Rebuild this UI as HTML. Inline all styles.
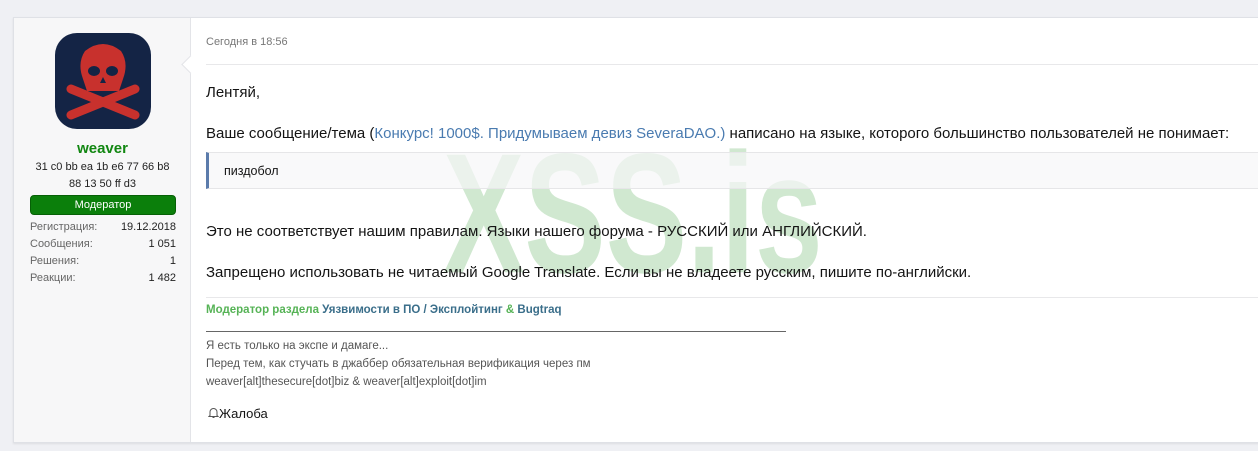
<!DOCTYPE html>
<html><head><meta charset="utf-8"><style>
body{margin:0;width:1258px;height:451px;background:#eff0f4;font-family:"Liberation Sans","DejaVu Sans",sans-serif;position:relative;overflow:hidden}
.card{position:absolute;left:13px;top:17px;width:1250px;height:424px;background:#fff;border:1px solid #dfe1e6;box-shadow:0 1px 2px rgba(0,0,0,.08)}
.side{position:absolute;left:0;top:0;width:176px;height:424px;background:#f7f7f8;border-right:1px solid #e3e4e8}
.arrow{position:absolute;left:170px;top:40px;width:12px;height:12px;background:#fff;border-left:1px solid #e3e4e8;border-bottom:1px solid #e3e4e8;transform:rotate(45deg)}
.av{position:absolute;left:41px;top:15px;width:96px;height:96px;border-radius:22px;background:#142445;overflow:hidden}
.name{position:absolute;left:0;width:177px;top:122px;text-align:center;color:#128712;font-weight:bold;font-size:15px}
.hex{position:absolute;left:0;width:177px;top:141px;text-align:center;font-size:11px;line-height:17px;color:#222}
.badge{position:absolute;left:16px;top:177px;width:144px;height:18px;background:#0b7f0b;border:1px solid #066006;border-radius:4px;color:#fff;font-size:11px;text-align:center;line-height:18px}
.st{position:absolute;left:16px;width:146px;font-size:11px;color:#666;display:flex;justify-content:space-between}
.st b{font-weight:normal;color:#222}
.t{position:absolute}
.wm{position:absolute;left:443px;top:128px;font-size:122px;font-weight:bold;color:rgba(150,205,150,.45);transform:scaleY(1.4);transform-origin:top left;line-height:1}
</style></head><body>
<div class="card">
<div class="side">
<div class="av"><svg width="96" height="96" viewBox="0 0 96 96">
<path d="M30 18 Q48 4 66 18 Q74 30 68 46 L64 58 L32 58 L28 46 Q22 30 30 18Z" fill="#c8312d"/>
<ellipse cx="39" cy="38" rx="6" ry="5" fill="#142445"/><ellipse cx="57" cy="38" rx="6" ry="5" fill="#142445"/>
<path d="M48 44 L45 50 L51 50Z" fill="#142445"/>
<path d="M16 56 L80 82 M80 56 L16 82" stroke="#c8312d" stroke-width="9" stroke-linecap="round"/>
</svg></div>
<div class="name">weaver</div>
<div class="hex">31 c0 bb ea 1b e6 77 66 b8<br>88 13 50 ff d3</div>
<div class="badge">Модератор</div>
<div class="st" style="top:203px"><span>Регистрация:</span><b>19.12.2018</b></div>
<div class="st" style="top:220px"><span>Сообщения:</span><b>1 051</b></div>
<div class="st" style="top:237px"><span>Решения:</span><b>1</b></div>
<div class="st" style="top:254px"><span>Реакции:</span><b>1 482</b></div>
</div>
<div class="arrow"></div>
</div>
<div class="wm">XSS.is</div>
<div class="t" style="left:206px;top:36px;font-size:11px;color:#777">Сегодня в 18:56</div>
<div style="position:absolute;left:206px;top:64px;width:1052px;height:1px;background:#e8e8ea"></div>
<div class="t" style="left:206px;top:84px;font-size:15px;color:#141414">Лентяй,</div>
<div class="t" style="left:206px;top:125px;font-size:15px;color:#141414;white-space:nowrap">Ваше сообщение/тема (<span style="color:#4a7bb0">Конкурс! 1000$. Придумываем девиз SeveraDAO.)</span> написано на языке, которого большинство пользователей не понимает:</div>
<div style="position:absolute;left:206px;top:152px;width:1052px;height:37px;background:rgba(247,247,248,.7);border-top:1px solid #e6e6e8;border-bottom:1px solid #e6e6e8;border-left:3px solid #5b7bab;box-sizing:border-box"></div>
<div class="t" style="left:224px;top:164px;font-size:12.5px;color:#141414">пиздобол</div>
<div class="t" style="left:206px;top:223px;font-size:15px;color:#141414">Это не соответствует нашим правилам. Языки нашего форума - РУССКИЙ или АНГЛИЙСКИЙ.</div>
<div class="t" style="left:206px;top:264px;font-size:15px;color:#141414">Запрещено использовать не читаемый Google Translate. Если вы не владеете русским, пишите по-английски.</div>
<div style="position:absolute;left:206px;top:297px;width:1052px;height:1px;background:#e8e8ea"></div>
<div class="t" style="left:206px;top:304px;font-size:11.5px;font-weight:bold;color:#56b356">Модератор раздела <span style="color:#3a6e8a">Уязвимости в ПО / Эксплойтинг</span> &amp; <span style="color:#3a6e8a">Bugtraq</span></div>
<div style="position:absolute;left:206px;top:331px;width:580px;height:1px;background:#666"></div>
<div class="t" style="left:206px;top:337px;font-size:11.5px;line-height:18px;color:#555">Я есть только на экспе и дамаге...<br>Перед тем, как стучать в джаббер обязательная верификация через пм<br>weaver[alt]thesecure[dot]biz &amp; weaver[alt]exploit[dot]im</div>
<div class="t" style="left:208px;top:406px;font-size:13px;color:#141414"><svg width="11" height="12" viewBox="0 0 11 12" style="vertical-align:-1px"><path d="M2 8.5 V5 a3.5 3.5 0 0 1 7 0 V8.5 L10 9.5 H1Z M4.5 10.5 h2" fill="none" stroke="#555" stroke-width="1"/></svg>Жалоба</div>
</body></html>
